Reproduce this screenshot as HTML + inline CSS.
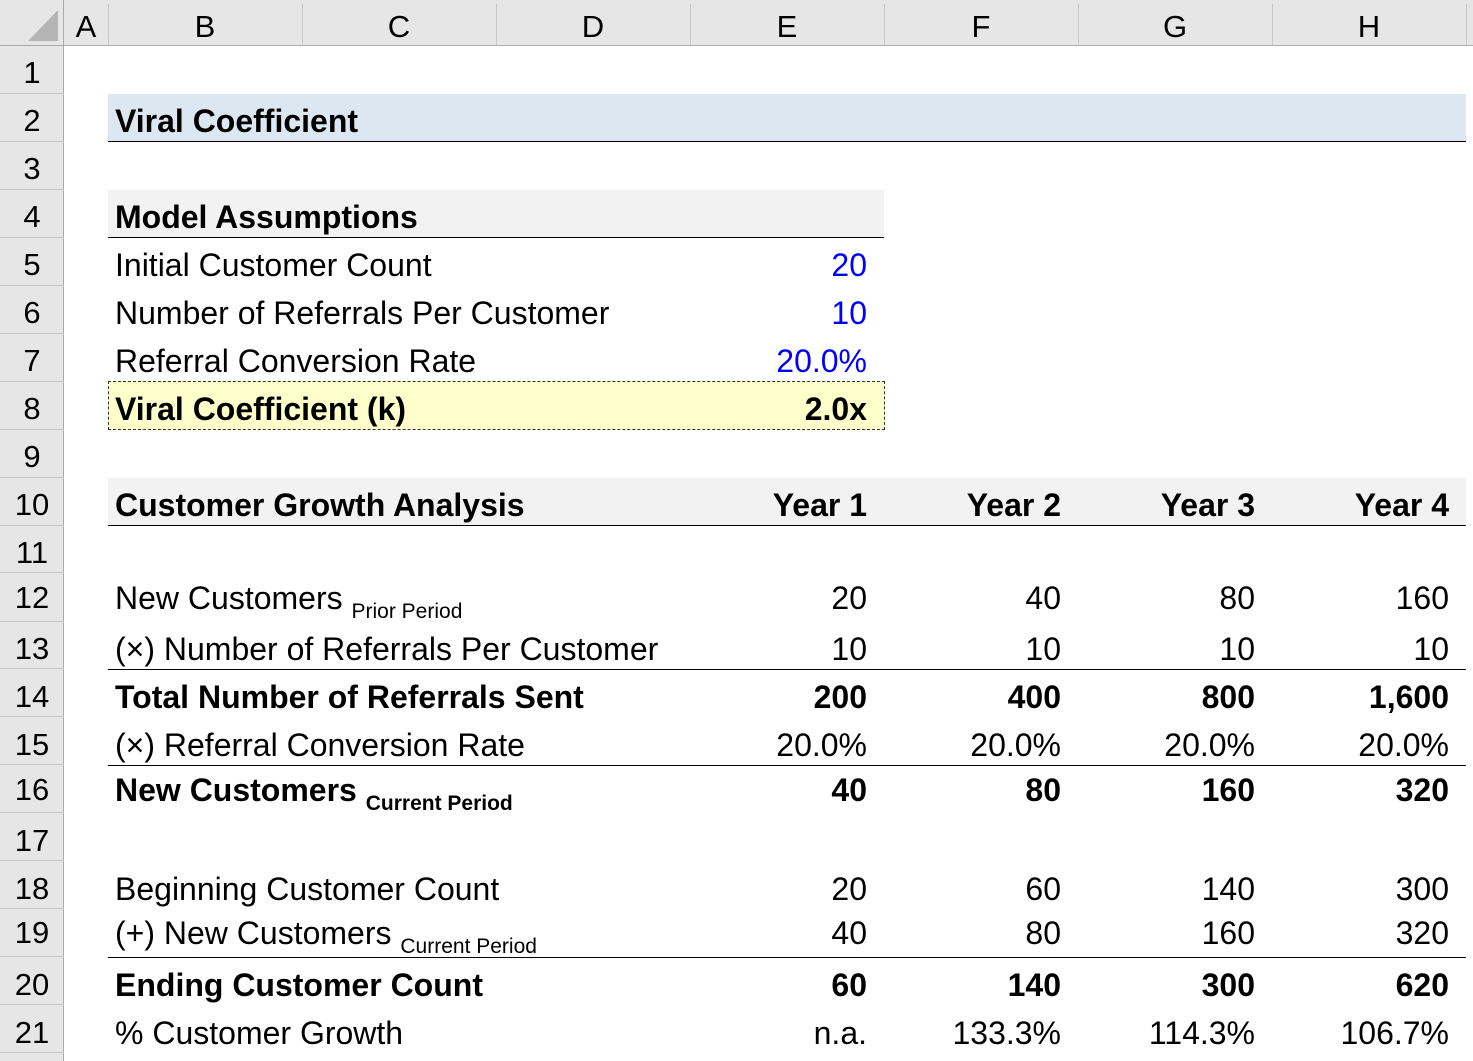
<!DOCTYPE html>
<html><head><meta charset="utf-8"><style>
body{margin:0;width:1473px;height:1061px;background:#fff;position:relative;overflow:hidden;font-family:"Liberation Sans",Arial,sans-serif;color:#000}
div{position:absolute}
.t{font-size:32px;line-height:50px;height:50px;white-space:nowrap;margin-top:0px}
.b{font-weight:bold}
.r{text-align:right}
.sub{font-size:21px;position:relative;top:9px}
.hd{background:#e6e6e6}
.ln{height:1px;background:#000}
.rn{left:0;width:64px;text-align:center;font-size:31px;line-height:50px;height:50px;color:#000}
.cl{top:0;height:46px;text-align:center;font-size:31px;line-height:54px;}
.blue{color:#0000ff}
</style></head><body>
<div class="hd" style="left:0;top:0;width:1473px;height:46px"></div>
<div class="hd" style="left:0;top:46px;width:64px;height:1015px"></div>
<div style="left:0;top:45px;width:1473px;height:1px;background:#ababab"></div>
<div style="left:63px;top:0;width:1px;height:1061px;background:#ababab"></div>
<svg style="position:absolute;left:28px;top:10px" width="32" height="32"><polygon points="30,0 30,31 0,31" fill="#b4b4b4"/></svg>
<div class="cl" style="left:64px;width:44px">A</div>
<div class="cl" style="left:108px;width:194px">B</div>
<div class="cl" style="left:302px;width:194px">C</div>
<div class="cl" style="left:496px;width:194px">D</div>
<div class="cl" style="left:690px;width:194px">E</div>
<div class="cl" style="left:884px;width:194px">F</div>
<div class="cl" style="left:1078px;width:194px">G</div>
<div class="cl" style="left:1272px;width:194px">H</div>
<div style="left:108px;top:4px;width:1px;height:41px;background:#c8c8c8"></div>
<div style="left:302px;top:4px;width:1px;height:41px;background:#c8c8c8"></div>
<div style="left:496px;top:4px;width:1px;height:41px;background:#c8c8c8"></div>
<div style="left:690px;top:4px;width:1px;height:41px;background:#c8c8c8"></div>
<div style="left:884px;top:4px;width:1px;height:41px;background:#c8c8c8"></div>
<div style="left:1078px;top:4px;width:1px;height:41px;background:#c8c8c8"></div>
<div style="left:1272px;top:4px;width:1px;height:41px;background:#c8c8c8"></div>
<div style="left:1466px;top:4px;width:1px;height:41px;background:#c8c8c8"></div>
<div style="left:0;top:93px;width:64px;height:1px;background:#c8c8c8"></div>
<div style="left:0;top:141px;width:64px;height:1px;background:#c8c8c8"></div>
<div style="left:0;top:189px;width:64px;height:1px;background:#c8c8c8"></div>
<div style="left:0;top:237px;width:64px;height:1px;background:#c8c8c8"></div>
<div style="left:0;top:285px;width:64px;height:1px;background:#c8c8c8"></div>
<div style="left:0;top:333px;width:64px;height:1px;background:#c8c8c8"></div>
<div style="left:0;top:381px;width:64px;height:1px;background:#c8c8c8"></div>
<div style="left:0;top:429px;width:64px;height:1px;background:#c8c8c8"></div>
<div style="left:0;top:477px;width:64px;height:1px;background:#c8c8c8"></div>
<div style="left:0;top:525px;width:64px;height:1px;background:#c8c8c8"></div>
<div style="left:0;top:572px;width:64px;height:1px;background:#c8c8c8"></div>
<div style="left:0;top:621px;width:64px;height:1px;background:#c8c8c8"></div>
<div style="left:0;top:668px;width:64px;height:1px;background:#c8c8c8"></div>
<div style="left:0;top:716px;width:64px;height:1px;background:#c8c8c8"></div>
<div style="left:0;top:764px;width:64px;height:1px;background:#c8c8c8"></div>
<div style="left:0;top:812px;width:64px;height:1px;background:#c8c8c8"></div>
<div style="left:0;top:860px;width:64px;height:1px;background:#c8c8c8"></div>
<div style="left:0;top:908px;width:64px;height:1px;background:#c8c8c8"></div>
<div style="left:0;top:956px;width:64px;height:1px;background:#c8c8c8"></div>
<div style="left:0;top:1004px;width:64px;height:1px;background:#c8c8c8"></div>
<div style="left:0;top:1052px;width:64px;height:1px;background:#c8c8c8"></div>
<div class="rn" style="top:48px">1</div>
<div class="rn" style="top:96px">2</div>
<div class="rn" style="top:144px">3</div>
<div class="rn" style="top:192px">4</div>
<div class="rn" style="top:240px">5</div>
<div class="rn" style="top:288px">6</div>
<div class="rn" style="top:336px">7</div>
<div class="rn" style="top:384px">8</div>
<div class="rn" style="top:432px">9</div>
<div class="rn" style="top:480px">10</div>
<div class="rn" style="top:528px">11</div>
<div class="rn" style="top:573px">12</div>
<div class="rn" style="top:624px">13</div>
<div class="rn" style="top:672px">14</div>
<div class="rn" style="top:720px">15</div>
<div class="rn" style="top:765px">16</div>
<div class="rn" style="top:816px">17</div>
<div class="rn" style="top:864px">18</div>
<div class="rn" style="top:908px">19</div>
<div class="rn" style="top:960px">20</div>
<div class="rn" style="top:1008px">21</div>

<div style="left:108px;top:94px;width:1358px;height:47px;background:#dde7f2"></div>
<div class="ln" style="left:108px;top:141px;width:1358px"></div>
<div style="left:108px;top:190px;width:776px;height:47px;background:#f2f2f2"></div>
<div class="ln" style="left:108px;top:237px;width:776px"></div>
<div style="left:108px;top:381px;width:775px;height:47px;background:#ffffcc;border:1px dashed #333"></div>
<div style="left:108px;top:478px;width:1358px;height:47px;background:#f2f2f2"></div>
<div class="ln" style="left:108px;top:525px;width:1358px"></div>
<div class="ln" style="left:108px;top:669px;width:1358px"></div>
<div class="ln" style="left:108px;top:765px;width:1358px"></div>
<div class="ln" style="left:108px;top:957px;width:1358px"></div>

<div class="t b" style="left:115px;top:96px">Viral Coefficient</div>
<div class="t b" style="left:115px;top:192px">Model Assumptions</div>
<div class="t" style="left:115px;top:240px">Initial Customer Count</div>
<div class="t r blue" style="right:606px;top:240px">20</div>
<div class="t" style="left:115px;top:288px">Number of Referrals Per Customer</div>
<div class="t r blue" style="right:606px;top:288px">10</div>
<div class="t" style="left:115px;top:336px">Referral Conversion Rate</div>
<div class="t r blue" style="right:606px;top:336px">20.0%</div>
<div class="t b" style="left:115px;top:384px">Viral Coefficient (k)</div>
<div class="t b r" style="right:606px;top:384px">2.0x</div>

<div class="t b" style="left:115px;top:480px">Customer Growth Analysis</div>
<div class="t b" style="right:606px;top:480px">Year 1</div>
<div class="t b" style="right:412px;top:480px">Year 2</div>
<div class="t b" style="right:218px;top:480px">Year 3</div>
<div class="t b" style="right:24px;top:480px">Year 4</div>

<div class="t" style="left:115px;top:573px">New Customers <span class="sub">Prior Period</span></div>
<div class="t" style="right:606px;top:573px">20</div><div class="t" style="right:412px;top:573px">40</div><div class="t" style="right:218px;top:573px">80</div><div class="t" style="right:24px;top:573px">160</div>

<div class="t" style="left:115px;top:624px">(×) Number of Referrals Per Customer</div>
<div class="t" style="right:606px;top:624px">10</div><div class="t" style="right:412px;top:624px">10</div><div class="t" style="right:218px;top:624px">10</div><div class="t" style="right:24px;top:624px">10</div>

<div class="t b" style="left:115px;top:672px">Total Number of Referrals Sent</div>
<div class="t b" style="right:606px;top:672px">200</div><div class="t b" style="right:412px;top:672px">400</div><div class="t b" style="right:218px;top:672px">800</div><div class="t b" style="right:24px;top:672px">1,600</div>

<div class="t" style="left:115px;top:720px">(×) Referral Conversion Rate</div>
<div class="t" style="right:606px;top:720px">20.0%</div><div class="t" style="right:412px;top:720px">20.0%</div><div class="t" style="right:218px;top:720px">20.0%</div><div class="t" style="right:24px;top:720px">20.0%</div>

<div class="t b" style="left:115px;top:765px">New Customers <span class="sub">Current Period</span></div>
<div class="t b" style="right:606px;top:765px">40</div><div class="t b" style="right:412px;top:765px">80</div><div class="t b" style="right:218px;top:765px">160</div><div class="t b" style="right:24px;top:765px">320</div>

<div class="t" style="left:115px;top:864px">Beginning Customer Count</div>
<div class="t" style="right:606px;top:864px">20</div><div class="t" style="right:412px;top:864px">60</div><div class="t" style="right:218px;top:864px">140</div><div class="t" style="right:24px;top:864px">300</div>

<div class="t" style="left:115px;top:908px">(+) New Customers <span class="sub">Current Period</span></div>
<div class="t" style="right:606px;top:908px">40</div><div class="t" style="right:412px;top:908px">80</div><div class="t" style="right:218px;top:908px">160</div><div class="t" style="right:24px;top:908px">320</div>

<div class="t b" style="left:115px;top:960px">Ending Customer Count</div>
<div class="t b" style="right:606px;top:960px">60</div><div class="t b" style="right:412px;top:960px">140</div><div class="t b" style="right:218px;top:960px">300</div><div class="t b" style="right:24px;top:960px">620</div>

<div class="t" style="left:115px;top:1008px">% Customer Growth</div>
<div class="t" style="right:606px;top:1008px">n.a.</div><div class="t" style="right:412px;top:1008px">133.3%</div><div class="t" style="right:218px;top:1008px">114.3%</div><div class="t" style="right:24px;top:1008px">106.7%</div>
</body></html>
